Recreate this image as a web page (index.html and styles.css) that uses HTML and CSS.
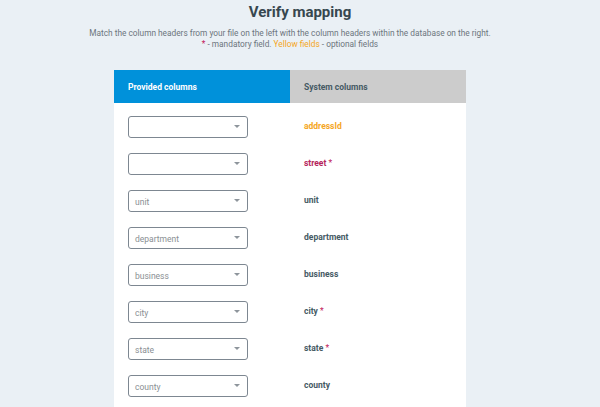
FILE: index.html
```html
<!DOCTYPE html>
<html>
<head>
<meta charset="utf-8">
<link rel="stylesheet" href="styles.css">
</head>
<body>
<div class="page">
  <h1 class="title">Verify mapping</h1>
  <p class="intro">Match the column headers from your file on the left with the column headers within the database on the right.<br><span class="req">*</span> - mandatory field. <span class="opt">Yellow fields</span> - optional fields</p>
  <div class="table">
    <div class="head">
      <div class="hcell provided">Provided columns</div>
      <div class="hcell system">System columns</div>
    </div>
    <div class="body">
      <div class="row"><div class="lcell"><div class="select"><span class="val"></span><span class="caret"></span></div></div><div class="rcell optional">addressId</div></div>
      <div class="row"><div class="lcell"><div class="select"><span class="val"></span><span class="caret"></span></div></div><div class="rcell mandatory">street <span class="req">*</span></div></div>
      <div class="row"><div class="lcell"><div class="select"><span class="val">unit</span><span class="caret"></span></div></div><div class="rcell">unit</div></div>
      <div class="row"><div class="lcell"><div class="select"><span class="val">department</span><span class="caret"></span></div></div><div class="rcell">department</div></div>
      <div class="row"><div class="lcell"><div class="select"><span class="val">business</span><span class="caret"></span></div></div><div class="rcell">business</div></div>
      <div class="row"><div class="lcell"><div class="select"><span class="val">city</span><span class="caret"></span></div></div><div class="rcell">city <span class="req">*</span></div></div>
      <div class="row"><div class="lcell"><div class="select"><span class="val">state</span><span class="caret"></span></div></div><div class="rcell">state <span class="req">*</span></div></div>
      <div class="row"><div class="lcell"><div class="select"><span class="val">county</span><span class="caret"></span></div></div><div class="rcell">county</div></div>
    </div>
  </div>
</div>
</body>
</html>
```
FILE: styles.css
```css
html, body {
  margin: 0;
  padding: 0;
  background: #eaf0f5;
  font-family: Roboto, "Liberation Sans", sans-serif;
  height: 100%;
  overflow: hidden;
}
.page {
  display: flex;
  flex-direction: column;
  align-items: center;
  padding-top: 3px;
}
.title {
  margin: 0;
  font-size: 15px;
  line-height: 18px;
  font-weight: 700;
  color: #37474f;
}
.intro {
  margin: 7px 20px 0 0;
  font-size: 8.3px;
  line-height: 11px;
  color: #6c757d;
  text-align: center;
}
.req { color: #c2185b; }
.opt { color: #f5a623; }
.table {
  margin: 20px 20px 0 0;
  width: 352px;
  background: #fff;
}
.head {
  display: flex;
  height: 33px;
}
.hcell {
  flex: 1;
  display: flex;
  align-items: center;
  padding-left: 14px;
  font-size: 8.5px;
  font-weight: 700;
}
.provided { background: #0091da; color: #fff; }
.system { background: #cccccc; color: #455a64; }
.body {
  padding: 13px 0 10px;
  display: flex;
  flex-direction: column;
  gap: 15px;
}
.row {
  display: flex;
  align-items: center;
  height: 22px;
}
.lcell {
  flex: 1;
  padding-left: 14px;
}
.select {
  width: 120px;
  height: 22px;
  box-sizing: border-box;
  border: 1px solid #7d8791;
  border-radius: 3px;
  display: flex;
  align-items: center;
  justify-content: space-between;
  padding: 0 7px 0 6px;
}
.val {
  font-size: 8.5px;
  color: #8a8f94;
  padding-top: 1px;
}
.caret {
  width: 0;
  height: 0;
  border-left: 3px solid transparent;
  border-right: 3px solid transparent;
  border-top: 3px solid #8e959c;
  margin-top: -1px;
}
.rcell {
  flex: 1;
  padding-left: 14px;
  font-size: 8.5px;
  font-weight: 700;
  color: #455a64;
  margin-top: -2px;
}
.rcell.optional { color: #f5a623; }
.rcell.mandatory { color: #b5245b; }
.rcell .req { font-weight: 400; color: #c2185b; }
```
